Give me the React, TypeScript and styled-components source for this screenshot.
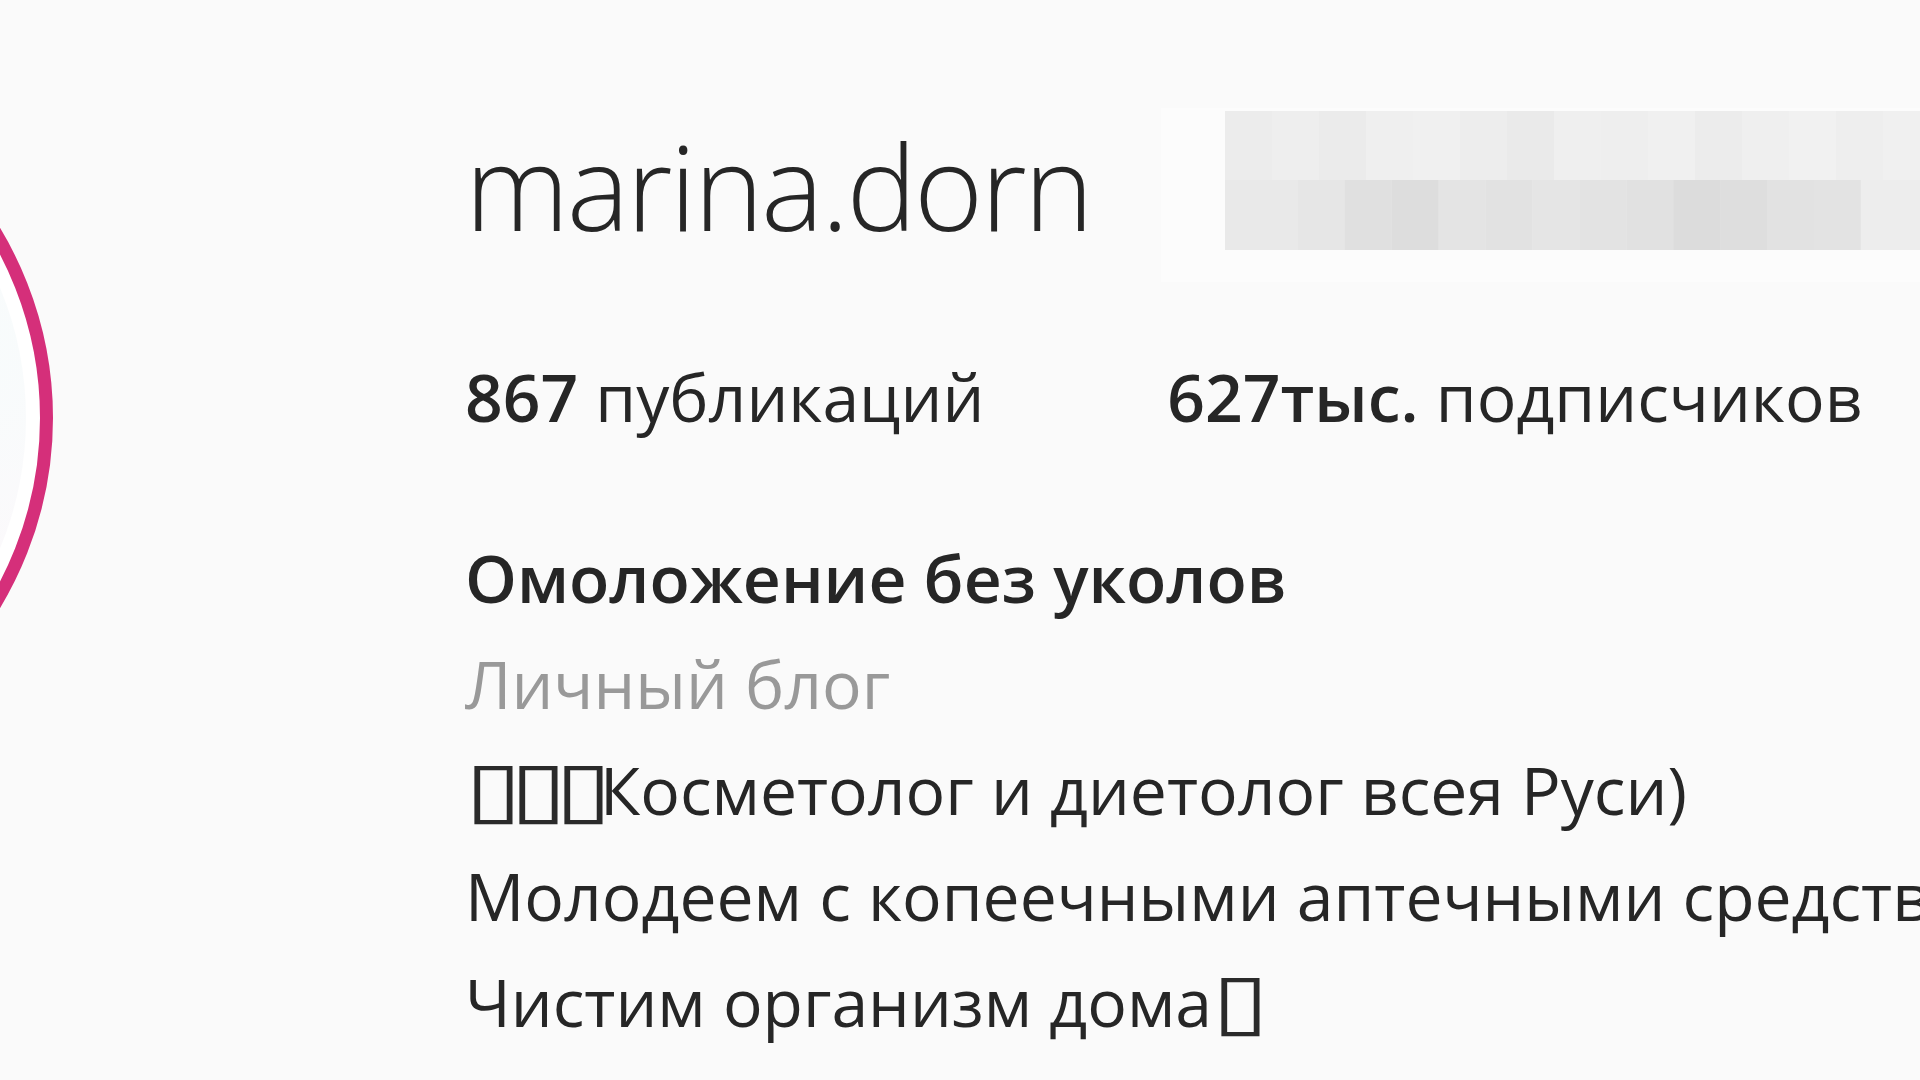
import React from "react";
import styled, { createGlobalStyle } from "styled-components";

const Global = createGlobalStyle`
  html, body { margin: 0; padding: 0; background: #fafafa; overflow: hidden; }
  #root { width: 1920px; height: 1080px; }
`;

const Page = styled.main`
  width: 1920px;
  height: 1080px;
  overflow: hidden;
  background: #fafafa;
  display: flex;
  align-items: flex-start;
  font-family: "Open Sans", "Noto Sans", "DejaVu Sans", sans-serif;
  color: #262626;
`;

const AvatarRing = styled.div`
  flex: none;
  box-sizing: border-box;
  width: 734px;
  height: 734px;
  margin-left: -681px;
  margin-top: 51px;
  border-radius: 50%;
  border: 13px solid #d52f7a;
  padding: 14px;
  background: #ffffff;
`;

const AvatarPhoto = styled.div`
  width: 100%;
  height: 100%;
  border-radius: 50%;
  background: radial-gradient(circle at 90% 40%, #f7fcfc 0%, #fdf8fb 40%, #fefefe 70%);
`;

const Info = styled.section`
  flex: 1;
  min-width: 0;
  margin-left: 412px;
  display: flex;
  flex-direction: column;
`;

const HeaderRow = styled.div`
  display: flex;
  align-items: flex-start;
  margin-top: 108px;
  height: 174px;
`;

const Username = styled.h1`
  margin: 6px 0 0 0;
  font-size: 118px;
  line-height: 144px;
  font-weight: 300;
  letter-spacing: -2.6px;
  white-space: nowrap;
  color: #262626;
`;

const Censor = styled.svg`
  flex: none;
  margin-left: 70px;
  display: block;
`;

const StatsRow = styled.ul`
  list-style: none;
  margin: 61px 0 0 0;
  padding: 0;
  display: flex;
  font-size: 66px;
  line-height: 106px;
  white-space: nowrap;
`;

const Stat = styled.li`
  margin-right: 183px;
`;

const Count = styled.span`
  font-weight: 600;
`;

const Bio = styled.div`
  margin-top: 75px;
  font-size: 66px;
  line-height: 106px;
  white-space: nowrap;
`;

const BioTitle = styled.h2`
  margin: 0;
  font-size: inherit;
  line-height: inherit;
  font-weight: 600;
`;

const Category = styled.div`
  color: #999999;
`;

const BioLine = styled.div``;

const Tofu = styled.span`
  display: inline-block;
  width: 45px;
  font-family: "DejaVu Sans", sans-serif;
  font-weight: 400;
  font-size: 76px;
  line-height: 1;
  letter-spacing: -6px;
  color: #2a2a2a;
  transform: scaleX(1.36);
  transform-origin: 0 0;
`;

const topCells = ["#ececec", "#eeeeee", "#ebebeb", "#efefef", "#f0f0f0", "#ededed", "#eaeaea", "#efefef", "#eeeeee", "#f0f0f0", "#ececec", "#efefef", "#f1f1f1", "#eeeeee", "#f0f0f0", "#f2f2f2"];
const bottomCells = ["#e6e6e6", "#e0e0e0", "#dddddd", "#e4e4e4", "#e2e2e2", "#e5e5e5", "#e3e3e3", "#e1e1e1", "#dcdcdc", "#dedede", "#e2e2e2", "#e3e3e3"];

function CensorMosaic() {
  const cell = 47;
  return (
    <Censor width="762" height="174" viewBox="0 0 762 174">
      <rect x="0" y="0" width="762" height="174" fill="#fcfcfc" />
      <rect x="64" y="3" width="698" height="139" fill="#ececec" />
      {topCells.map((c, i) => (
        <rect key={"t" + i} x={64 + i * cell} y="3" width={cell} height="69" fill={c} />
      ))}
      <rect x="64" y="72" width="73" height="70" fill="#e9e9e9" />
      {bottomCells.map((c, i) => (
        <rect key={"b" + i} x={137 + i * 46.9} y="72" width="46.9" height="70" fill={c} />
      ))}
      <rect x="700" y="72" width="62" height="70" fill="#ededed" />
    </Censor>
  );
}

export default function App() {
  return (
    <>
      <Global />
      <Page>
        <AvatarRing>
          <AvatarPhoto />
        </AvatarRing>
        <Info>
          <HeaderRow>
            <Username>marina.dorn</Username>
            <CensorMosaic />
          </HeaderRow>
          <StatsRow>
            <Stat>
              <Count>867</Count> публикаций
            </Stat>
            <Stat>
              <Count>627тыс.</Count> подписчиков
            </Stat>
          </StatsRow>
          <Bio>
            <BioTitle>Омоложение без уколов</BioTitle>
            <Category>Личный блог</Category>
            <BioLine>
              <Tofu>▯</Tofu>
              <Tofu>▯</Tofu>
              <Tofu>▯</Tofu>Косметолог и диетолог всея Руси)
            </BioLine>
            <BioLine>Молодеем с копеечными аптечными средствами</BioLine>
            <BioLine>
              Чистим организм дома<Tofu>▯</Tofu>
            </BioLine>
          </Bio>
        </Info>
      </Page>
    </>
  );
}
